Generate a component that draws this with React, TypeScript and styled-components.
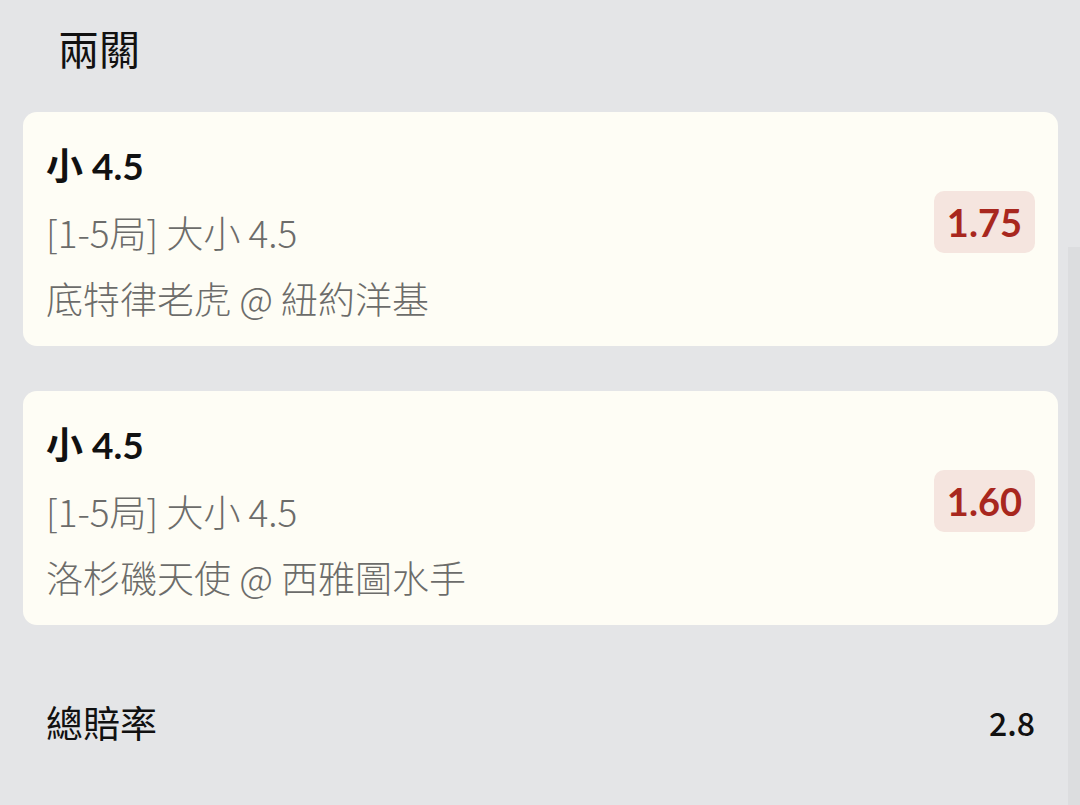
import styled, { createGlobalStyle } from 'styled-components'

type Leg = {
  pick: string
  market: string
  match: string
  odds: string
}

const legs: Leg[] = [
  { pick: '小 4.5', market: '[1-5局] 大小 4.5', match: '底特律老虎 @ 紐約洋基', odds: '1.75' },
  { pick: '小 4.5', market: '[1-5局] 大小 4.5', match: '洛杉磯天使 @ 西雅圖水手', odds: '1.60' },
]

const GlobalStyle = createGlobalStyle`
  html, body {
    margin: 0;
    padding: 0;
    background: #e4e5e7;
  }
  body {
    font-family: Lato, 'Noto Sans CJK TC', sans-serif;
    color: #111;
  }
`

export default function App() {
  return (
    <>
      <GlobalStyle />
      <Page>
        <Title>兩關</Title>
        <CardList>
          {legs.map((leg, i) => (
            <Card key={i}>
              <Info>
                <Pick>{leg.pick}</Pick>
                <Sub>{leg.market}</Sub>
                <Sub>{leg.match}</Sub>
              </Info>
              <Odds>{leg.odds}</Odds>
            </Card>
          ))}
        </CardList>
        <TotalRow>
          <TotalLabel>總賠率</TotalLabel>
          <TotalValue>2.8</TotalValue>
        </TotalRow>
      </Page>
      <ScrollTrack />
    </>
  )
}

const Page = styled.div`
  display: flex;
  flex-direction: column;
  padding: 0 22px 0 23px;
  min-height: 805px;
  box-sizing: border-box;
`

const Title = styled.div`
  font-family: 'Noto Sans CJK TC', sans-serif;
  font-size: 41px;
  line-height: 56px;
  padding: 19px 0 0 35px;
  color: #111;
`

const CardList = styled.div`
  display: grid;
  grid-row-gap: 45px;
  margin-top: 37px;
`

const Card = styled.div`
  display: flex;
  align-items: center;
  justify-content: space-between;
  background: #fefdf5;
  border-radius: 14px;
  padding: 21px 23px 15px 23px;
  height: 234px;
  box-sizing: border-box;
`

const Info = styled.div`
  display: grid;
  align-self: flex-start;
`

const Pick = styled.div`
  font-size: 37px;
  font-weight: 700;
  line-height: 66px;
  color: #111;
`

const Sub = styled.div`
  font-family: 'Noto Sans CJK TC', sans-serif;
  font-size: 37px;
  font-weight: 300;
  line-height: 66px;
  color: #6c6c6a;
`

const Odds = styled.div`
  font-size: 38px;
  font-weight: 700;
  line-height: 62px;
  height: 62px;
  padding: 0 13px;
  margin-top: -20px;
  border-radius: 10px;
  background: #f5e5df;
  color: #a8271e;
`

const TotalRow = styled.div`
  display: flex;
  align-items: center;
  justify-content: space-between;
  padding: 0 23px;
  margin-top: 72px;
  height: 50px;
`

const TotalLabel = styled.div`
  font-family: 'Noto Sans CJK TC', sans-serif;
  font-size: 37px;
  color: #111;
`

const TotalValue = styled.div`
  font-family: 'Noto Sans CJK TC', sans-serif;
  font-size: 32px;
  font-weight: 500;
  color: #111;
`

const ScrollTrack = styled.div`
  position: fixed;
  right: 0;
  top: 247px;
  bottom: 0;
  width: 12px;
  background: #dcdddf;
`
